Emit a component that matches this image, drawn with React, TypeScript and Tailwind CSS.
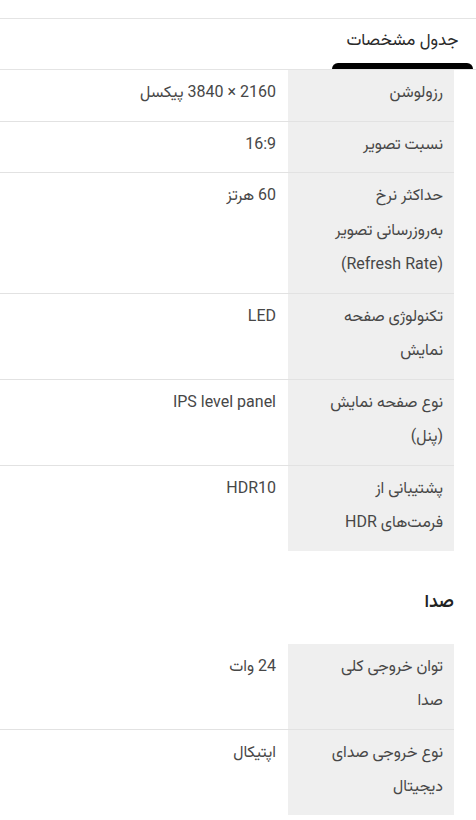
import React from 'react';

type Spec = { label: string[]; value: string };

const display: Spec[] = [
  { label: ['رزولوشن'], value: '2160 × 3840 پیکسل' },
  { label: ['نسبت تصویر'], value: '16:9' },
  { label: ['حداکثر نرخ', 'بەروزرسانی تصویر', '(Refresh Rate)'], value: '60 هرتز' },
  { label: ['تکنولوژی صفحه', 'نمایش'], value: 'LED' },
  { label: ['نوع صفحه نمایش', '(پنل)'], value: 'IPS level panel' },
  { label: ['پشتیبانی از', 'فرمت‌های HDR'], value: 'HDR10' },
];

const sound: Spec[] = [
  { label: ['توان خروجی کلی', 'صدا'], value: '24 وات' },
  { label: ['نوع خروجی صدای', 'دیجیتال'], value: 'اپتیکال' },
];

const SpecTable: React.FC<{ rows: Spec[] }> = ({ rows }) => (
  <div className="mr-[22px]">
    {rows.map((r, i) => (
      <div
        key={i}
        className={`flex ${i < rows.length - 1 ? 'border-b border-[#e2e2e2]' : ''}`}
      >
        <div className="w-[166px] shrink-0 bg-[#efefef] pr-[11px] pt-[5px] pb-[11px] leading-[34.5px]">
          {r.label.map((l, j) => (
            <div key={j} className="whitespace-nowrap">{l}</div>
          ))}
        </div>
        <div className="flex-1 pr-3 pt-[5px] pb-[11px] leading-[34.5px] whitespace-nowrap">{r.value}</div>
      </div>
    ))}
  </div>
);

export default function App() {
  return (
    <div
      dir="rtl"
      className="w-[476px] h-[820px] overflow-hidden bg-white text-[16px] font-normal text-[#474747] font-[Roboto,'Vazirmatn','Noto_Sans_Arabic','DejaVu_Sans',sans-serif]"
    >
      <div className="h-[18px]" />
      <div className="border-t border-b border-[#e4e4e4] h-[52px] flex">
        <div className="relative mr-[3px] w-[141px] flex justify-center pt-[8px]">
          <span className="text-[#2a2a2a] text-[17px] font-normal leading-[24px]">جدول مشخصات</span>
          <span className="absolute bottom-0 inset-x-0 h-[6px] bg-black rounded-t-[7px]" />
        </div>
      </div>

      <SpecTable rows={display} />

      <h3 className="mr-[22px] pt-[35px] pb-[28px] text-[18px] font-semibold text-[#222] leading-[30px]">
        صدا
      </h3>

      <SpecTable rows={sound} />
    </div>
  );
}
